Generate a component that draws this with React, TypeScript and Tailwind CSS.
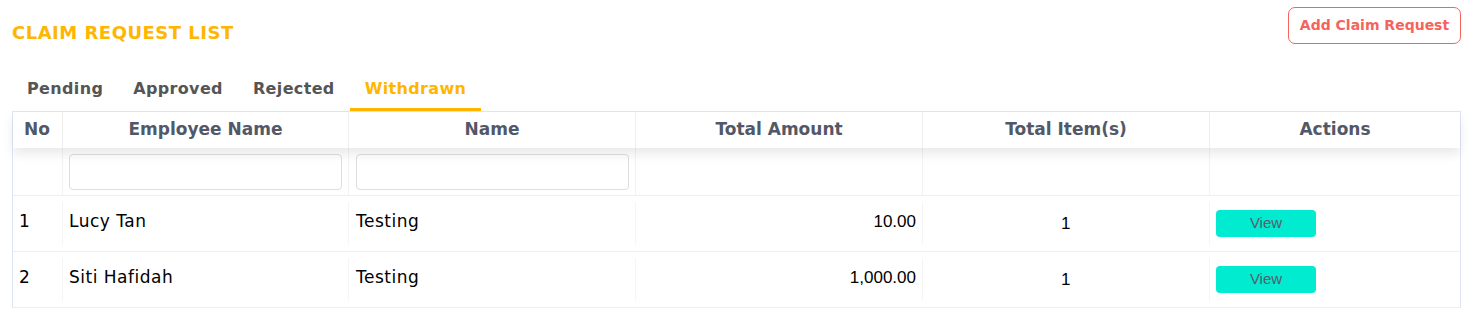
import { useState } from 'react'

type Claim = {
  id: number
  employee: string
  name: string
  amount: string
  items: number
}

const claims: Claim[] = [
  { id: 1, employee: 'Lucy Tan', name: 'Testing', amount: '10.00', items: 1 },
  { id: 2, employee: 'Siti Hafidah', name: 'Testing', amount: '1,000.00', items: 1 },
]

const tabs = ['Pending', 'Approved', 'Rejected', 'Withdrawn']

const cols = 'grid grid-cols-[49px_286px_287px_287px_287px_1fr]'

export default function App() {
  const [tab, setTab] = useState('Withdrawn')

  return (
    <div className="min-h-[310px] bg-white pl-3 pr-[9px] font-['DejaVu_Sans',sans-serif] text-black">
      <div className="flex items-start justify-between">
        <h1 className="mt-[24px] text-[18px] font-bold leading-[18px] tracking-[0.5px] text-[#ffb600]">CLAIM REQUEST LIST</h1>
        <button className="mt-[7px] h-[37px] w-[173px] rounded-[7px] border border-[#f4645c] text-[14px] font-bold text-[#f4645c]">
          Add Claim Request
        </button>
      </div>

      <div className="mt-[23px] flex">
        {tabs.map((t) => (
          <button
            key={t}
            onClick={() => setTab(t)}
            className={
              'h-[44px] border-b-[3px] px-[15px] pt-[2px] text-[16px] font-bold tracking-[0.35px] ' +
              (tab === t ? 'border-[#ffb600] text-[#ffb600]' : 'border-transparent text-[#555555]')
            }
          >
            {t}
          </button>
        ))}
      </div>

      <div className="border border-b-0 border-[#dfe5f7]">
        <div className={cols + ' relative z-10 h-[36px] bg-white text-[17px] font-bold text-[#535868] shadow-[0_6px_12px_rgba(0,0,0,0.09)]'}>
          <div className="flex items-center px-[11px]">No</div>
          <div className="flex items-center justify-center border-l border-[#eeeeee]">Employee Name</div>
          <div className="flex items-center justify-center border-l border-[#eeeeee]">Name</div>
          <div className="flex items-center justify-center border-l border-[#eeeeee]">Total Amount</div>
          <div className="flex items-center justify-center border-l border-[#eeeeee]">Total Item(s)</div>
          <div className="flex items-center justify-center border-l border-[#eeeeee]">Actions</div>
        </div>

        <div className={cols + ' h-[48px] border-b border-[#eceff5]'}>
          <div />
          <div className="flex items-center border-l border-[#f3f3f3] px-[6px]">
            <input className="h-[36px] w-full rounded-[4px] border border-[#dedede] bg-white outline-none" />
          </div>
          <div className="flex items-center border-l border-[#f3f3f3] pl-[7px] pr-[6px]">
            <input className="h-[36px] w-full rounded-[4px] border border-[#dedede] bg-white outline-none" />
          </div>
          <div className="border-l border-[#f3f3f3]" />
          <div className="border-l border-[#f3f3f3]" />
          <div className="border-l border-[#f3f3f3]" />
        </div>

        {claims.map((c) => (
          <div key={c.id} className={cols + ' h-[56px] border-b border-[#eceff5] py-[6px] text-[17px] tracking-[0.5px]'}>
            <div className="flex items-center px-[6px] pb-[4px]">{c.id}</div>
            <div className="flex items-center border-l border-[#f5f5f5] px-[6px] pb-[4px]">{c.employee}</div>
            <div className="flex items-center border-l border-[#f5f5f5] px-[7px] pb-[4px]">{c.name}</div>
            <div className="flex items-center justify-end border-l border-[#f5f5f5] px-[6px] pb-[3px] font-['Liberation_Sans',sans-serif] text-[17px] tracking-normal">
              {c.amount}
            </div>
            <div className="flex items-center justify-center border-l border-[#f5f5f5] font-['Liberation_Sans',sans-serif] text-[17px]">
              {c.items}
            </div>
            <div className="flex items-center border-l border-[#f5f5f5] px-[6px]">
              <button className="h-[27px] w-[100px] rounded-[4px] bg-[#00ebcf] font-['Liberation_Sans',sans-serif] text-[15px] tracking-normal text-[#575b6e]">
                View
              </button>
            </div>
          </div>
        ))}
      </div>
    </div>
  )
}
